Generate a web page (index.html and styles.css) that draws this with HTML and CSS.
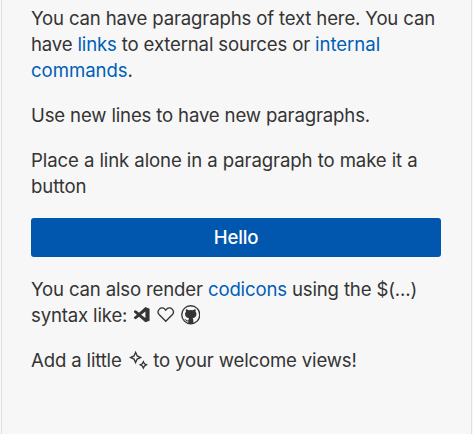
FILE: index.html
```html
<!DOCTYPE html>
<html lang="en">
<head>
<meta charset="utf-8">
<title>Welcome view</title>
<link rel="stylesheet" href="styles.css">
</head>
<body>
<main class="welcome">
  <p>You can have paragraphs of text here. You can<br>have <a href="#">links</a> to external sources or <a class="wide" href="#">internal<br>commands</a>.</p>
  <p>Use new lines to have new paragraphs.</p>
  <p class="roomy">Place a link alone in a paragraph to make it a<br>button</p>
  <a class="button" href="#">Hello</a>
  <p>You can also render <a href="#">codicons</a> using the $(...)<br>syntax like: <svg class="icon code" viewBox="0 0 16 16"><path fill-rule="evenodd" d="M11 1.7 5.8 6.3 3 4.3l-1.4.7v.9L4 7.9 1.6 10v.9l1.4.7 2.8-2L11 14.2l3.4-1.3V3zM11 5.3v5.3L7.5 7.9z"/></svg> <svg class="icon" viewBox="0 0 16 16"><path class="line" d="M8 13.3 2.7 8a3.4 3.4 0 0 1 0-4.6 3.3 3.3 0 0 1 4.6 0l.7.8.7-.8a3.3 3.3 0 0 1 4.6 0 3.4 3.4 0 0 1 0 4.6z"/></svg> <svg class="icon" viewBox="0 0 16 16"><circle class="line" cx="8" cy="8" r="7.4"/><path d="M4.1 3.5c.7 0 1.5.4 2.2.9a7 7 0 0 1 3.4 0c.7-.5 1.5-.9 2.2-.9.3.8.3 1.4 0 2 .5.5.8 1.1.8 1.9 0 2.4-1.4 3.1-3.2 3.4.4.4.6.9.6 1.5V15.3H6v-1.9c-1.6.3-2-.4-2.4-1-.2-.4-.5-.6-.8-.8 1.3-.2 1.5 1.2 2.6 1.2.3 0 .5-.1.7-.2 0-.7.2-1.4.5-1.8-1.8-.3-3.3-1-3.3-3.4 0-.8.3-1.4.8-1.9-.3-.6-.3-1.2 0-2z"/></svg></p>
  <p>Add a little <svg class="icon sparkle" viewBox="0 0 16 16"><path class="line" d="M5.4 1.9 6.7 4.9 9.5 6.1 6.7 7.4 5.4 10.3 4.1 7.4 1.3 6.1 4.1 4.9zM11.8 9.6l.9 1.7 1.7.9-1.7.9-.9 1.7-.9-1.7-1.7-.9 1.7-.9z"/></svg> to your welcome views!</p>
</main>
</body>
</html>
```
FILE: styles.css
```css
* { box-sizing: border-box; }
body { margin: 0; background: #f7f7f7; }
.welcome {
  height: 434px;
  margin: 0 1px;
  padding: 5px 30px 0 29px;
  border: solid #e1e1e1;
  border-width: 0 1px;
  font: 18.6px/26px Inter, "Liberation Sans", sans-serif;
  letter-spacing: -0.16px;
  color: #343434;
  white-space: nowrap;
}
p { margin: 0 0 19px; }
a { color: #005fb8; text-decoration: none; }
.roomy { letter-spacing: -0.1px; }
.wide { letter-spacing: -0.05px; }
.button {
  display: block;
  height: 39px;
  margin-bottom: 19px;
  border-radius: 3px;
  background: #0057ad;
  color: #fff;
  font-weight: 500;
  line-height: 39px;
  text-align: center;
}
.icon {
  width: 19.5px;
  height: 19.5px;
  margin-right: -0.5px;
  vertical-align: -2.5px;
  fill: currentColor;
}
.sparkle { margin: 0 0 0 2px; }
.line { fill: none; stroke: currentColor; stroke-width: 1.1; }
```
